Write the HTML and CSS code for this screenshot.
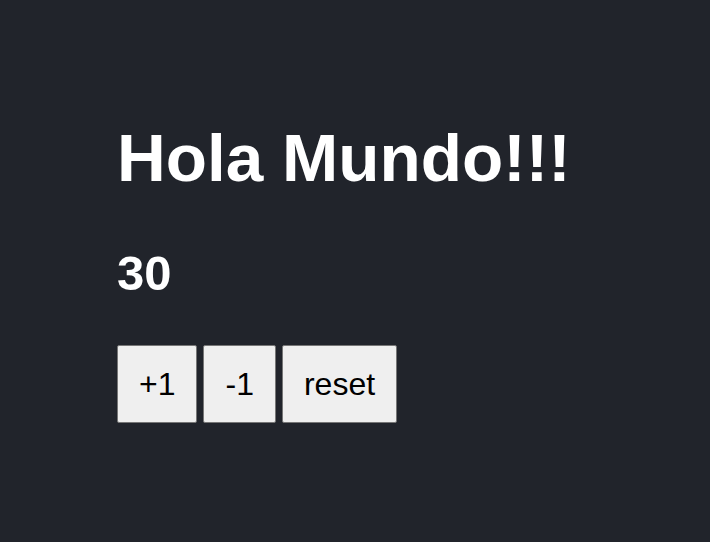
FILE: index.html
```html
<!DOCTYPE html>
<html>
<head>
<meta charset="utf-8">
<link rel="stylesheet" href="styles.css">
</head>
<body>
<div class="app">
  <h1 class="title">Hola Mundo!!!</h1>
  <h2 class="count">30</h2>
  <div class="buttons">
    <button class="btn">+1</button>
    <button class="btn">-1</button>
    <button class="btn">reset</button>
  </div>
</div>
</body>
</html>
```
FILE: styles.css
```css
html, body {
  margin: 0;
  padding: 0;
  height: 100%;
}
body {
  background: #21242b;
  font-family: "Liberation Sans", Arial, sans-serif;
  color: #ffffff;
}
.app {
  display: flex;
  flex-direction: column;
  align-items: flex-start;
  padding: 118px 0 0 117px;
}
.title {
  margin: 0;
  font-size: 67.5px;
  font-weight: bold;
  line-height: 80px;
}
.count {
  margin: 47px 0 0 0;
  font-size: 49px;
  font-weight: bold;
  line-height: 56px;
}
.buttons {
  display: flex;
  gap: 6px;
  margin-top: 44px;
}
.btn {
  font-family: "Liberation Sans", Arial, sans-serif;
  font-size: 32px;
  color: #000;
  background: #efefef;
  border: 1px solid #767676;
  border-radius: 2px;
  padding: 0 21px;
  height: 78px;
}
.btn-wide {
  padding: 0 22px;
}
```
